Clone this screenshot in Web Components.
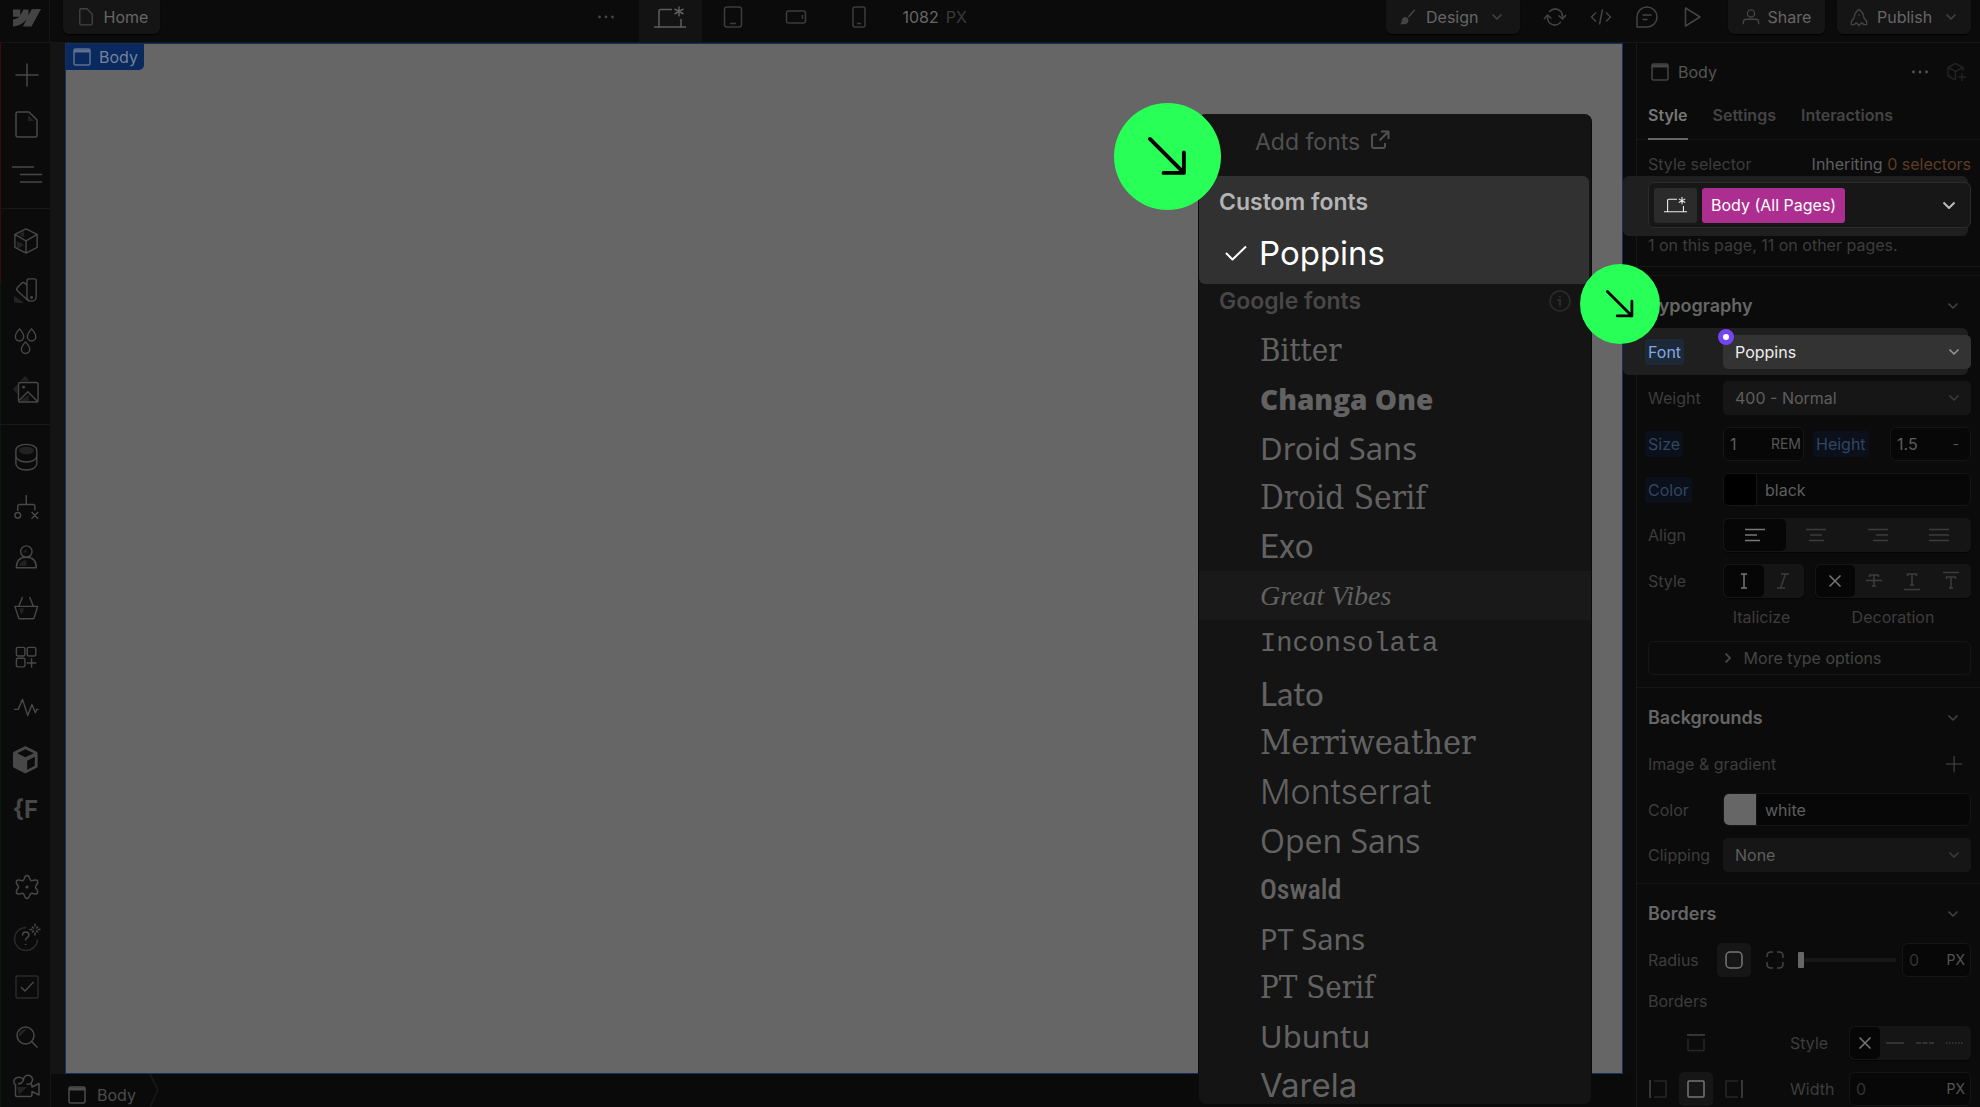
<!DOCTYPE html>
<html lang="en">
<head>
<meta charset="utf-8">
<title>Designer – Home</title>
<style>
html,body{margin:0;height:100%;background:#0b0b0b;overflow:hidden}
body{font-family:Inter,"Liberation Sans",sans-serif;font-size:16px;line-height:20px;color:#666}
</style>
</head>
<body>
<designer-app></designer-app>
<script>
const ICONS = {
  logo:[30,20,'<path fill="currentColor" stroke="none" d="M29 1 19.500 18.500H11L14.700 11C11.500 15.500 7 18 1 18.500V11.500Q5 11 7.500 8.800H1V1.500H8.300V7.500L11.400 1.500H16.500V7.400L19.600 1.200Z"/>'],
  page:[26,30,'<path d="M2 4a2 2 0 0 1 2-2h11l8 8v15a2 2 0 0 1-2 2H4a2 2 0 0 1-2-2z"/><path fill="#222" stroke="none" d="M14 5l6 6h-6z"/>'],
  doc:[18,22,'<path d="M2 3.500a1.500 1.500 0 0 1 1.500-1.500H10l6 6v10.500a1.500 1.500 0 0 1-1.500 1.500h-11A1.500 1.500 0 0 1 2 18.500z"/>'],
  plus:[26,26,'<path d="M13 1.500v23M1.500 13h23"/>'],
  nav:[32,22,'<path d="M1 3h22M9 10.500h22M9 18h22"/>'],
  cube:[28,30,'<path fill="#222" stroke="none" d="M4 15l8 4-8 5zM6 8l6-4v7z"/><path d="M14 2l12 6v14l-12 6-12-6V8zM2 8l12 7 12-7M14 15v13"/>'],
  swatch:[28,30,'<path fill="#222" stroke="none" d="M1 20l11 8H4q-3 0-3-3z"/><path d="M15 4a2 2 0 0 1 2-2h6a2 2 0 0 1 2 2v17a5 5 0 0 1-10 0zM15 9l-2-2q-2-2-4 0l-4 4q-2 2 0 4l12 11"/><circle cx="20" cy="22" r=".8" fill="currentColor"/>'],
  drops:[28,30,'<path d="M7 2q4.500 5 4.500 8.500a4.500 4.500 0 0 1-9 0Q2.500 7 7 2zM20 2q4.500 5 4.500 8.500a4.500 4.500 0 0 1-9 0Q15.500 7 20 2zM13.500 16q4.500 5 4.500 8a4.500 4.500 0 0 1-9 0Q9 21 13.500 16z"/>'],
  image:[32,32,'<path fill="#222" stroke="none" d="M1 14l5-5v11zM9 5l5-5 5 5zM9 27l9-7v7z"/><rect x="7" y="7" width="21" height="21" rx="2"/><path d="M8 26l9-9 10 10"/><circle cx="12.500" cy="12" r=".8" fill="currentColor"/>'],
  db:[26,32,'<ellipse cx="13" cy="9" rx="8" ry="4" fill="#222" stroke="none"/><path d="M2 9c0-3.500 4-6.500 11-6.500S24 5.500 24 9v14c0 3.500-4 6.500-11 6.500S2 26.500 2 23zM2 14.500c0 3.500 4 6.500 11 6.500s11-3 11-6.500"/>'],
  logic:[28,28,'<path d="M14 1v10M5 18v-5q0-2 2-2h14q2 0 2 2v4M19.500 19l7 7m0-7l-7 7"/><circle cx="5" cy="22.500" r="3"/>'],
  user:[26,28,'<path fill="#222" stroke="none" d="M5 23q2-6 8-6v6zM9 9l4-4v4z"/><circle cx="13" cy="8" r="6"/><path d="M2.500 25q0-11 10.500-11t10.500 11z"/>'],
  basket:[28,26,'<path fill="#222" stroke="none" d="M6 14h6l-3 7z"/><path d="M2 12h24l-4 12.500q-.3 .5-1 .5H7q-.7 0-1-.5zM10 2l-4 10M17.500 2l4 10"/>'],
  apps:[26,26,'<rect x="2.500" y="2.500" width="9" height="9" rx="1.500"/><rect x="14" y="2.500" width="9" height="9" rx="1.500"/><rect x="2.500" y="14" width="9" height="9" rx="1.500"/><path d="M18.500 14v10M13.500 19h10"/>'],
  pulse:[28,22,'<path d="M1 13h4.500L10 2.500l5.500 17L20 8l3.500 8.500L25 13h2"/>'],
  solid:[28,32,'<path fill="currentColor" stroke="none" fill-rule="evenodd" d="M14 1l12 6q1 .5 1 2v13q0 1.500-1 2l-12 6-12-6q-1-.5-1-2V9q0-1.500 1-2zM14 4.500L5.500 8.700 14 13l9-4.300zM16 16.500v9.500l8-4.200V12.500z"/>'],
  gear:[26,28,'<path d="M13 2.500c3 0 2 4 4 5s5-2 6.500.5-2 4-2 6 3.500 3.500 2 6-4.500-.5-6.500.5-1 5-4 5-2-4-4-5-5 2-6.500-.5 2-4 2-6-3.500-3.500-2-6 4.500.5 6.500-.5 1-5 4-5z"/><circle cx="13" cy="14" r=".8" fill="currentColor"/>'],
  help:[30,30,'<path opacity=".5" d="M14 5.500a11.500 11.500 0 1 0 11.500 12"/><path d="M10.500 13.500q0-3.500 3.200-3.500t3.200 3q0 1.700-2 2.800-1.300.8-1.300 2.700M13.600 22v1M23 1.500v3m0 6v3M17.500 7.500h3m5 0h3M20 4.500l2 2m4-2l-2 2m-4 4l2-2m4 2l-2-2"/>'],
  check:[26,26,'<rect opacity=".5" x="2" y="2" width="22" height="22" rx="1.500"/><path d="M7 13l4 4 8.500-9"/>'],
  search:[26,26,'<path fill="#222" stroke="none" d="M5 13q-1-8 8-8z"/><circle cx="11.500" cy="11.500" r="8.500"/><path d="M17.500 17.500l6 6"/>'],
  video:[30,26,'<path fill="#222" stroke="none" d="M5 13h10l-8 8z"/><path d="M3.500 10V21q0 1.500 1.500 1.500h13q2 0 2-2v-3l7 3.500V9.500l-7 3.500q0-3-1.500-3.500M3.500 11a5 4.500 0 1 1 8-5M6 9.500q3.500 1 5.500-3.500a4.500 4.500 0 1 1 3 4"/>'],
  dots:[18,4,'<g fill="currentColor" stroke="none"><circle cx="2.500" cy="2" r="1.400"/><circle cx="9" cy="2" r="1.400"/><circle cx="15.500" cy="2" r="1.400"/></g>'],
  laptop:[32,24,'<path d="M0 22h32M5 22V6q0-1.500 1.500-1.500H18M27 14v8M25 1.500v10M20.500 4l9 5m0-5l-9 5"/>'],
  tablet:[20,24,'<rect x="1.500" y="2" width="17" height="20" rx="2.500"/><path d="M7 18.500h6"/>'],
  land:[22,16,'<rect x="1.500" y="2" width="19" height="12" rx="2"/><path d="M17.500 6v4"/>'],
  phone:[16,24,'<rect x="2" y="2" width="12" height="20" rx="2"/><path d="M6 18.500h4"/>'],
  brush:[20,20,'<path d="M17.500 2L10.500 10" stroke-width="1.800"/><path fill="currentColor" stroke="none" d="M1 18q2-1 2-4 .500-4 4-4 3.500.500 3.500 4t-4 4z"/>'],
  down:[12,8,'<path d="M1.500 1.500L6 6l4.500-4.500"/>'],
  down2:[14,9,'<path stroke-width="2" d="M1.500 1.500L7 7l5.500-5.500"/>'],
  right:[8,12,'<path stroke-width="1.800" d="M1.500 1.500L6 6l-4.500 4.500"/>'],
  sync:[24,20,'<path d="M6 5q6-6 12-0.500 1.500 2 1.500 6M15.500 8.500l4 3.500 3.500-4M18 15q-6 6-12 .5Q4.300 13.500 4.500 9.500M1 12l3.500-4 4 3.500"/>'],
  code:[22,20,'<path d="M6 5.500L1.500 10 6 14.500M16 5.500l4.500 4.500-4.500 4.500M12.500 2.500l-3 15"/>'],
  chat:[24,24,'<path d="M2 22V11.500a10 10 0 1 1 10 10.500zM7.500 10h9M7.500 14.500h5"/>'],
  play:[20,22,'<path d="M2.500 2l14.500 9-14.500 9z"/>'],
  person:[20,20,'<circle cx="10" cy="6" r="4"/><path d="M1.500 18v-2q0-3.500 3.500-3.500h10q3.500 0 3.500 3.500v2"/>'],
  rocket:[20,20,'<path d="M4.500 11Q5 5 10 1.500 15 5 15.500 11l3 4v3.500h-3l-2.500-2-3 3-3-3-2.500 2h-3V15zM10 7v1.500"/>'],
  body:[18,18,'<rect x="1" y="1" width="16" height="16" rx="1.500"/><path stroke-width="3" d="M1 3h16"/>'],
  cubeplus:[20,20,'<path d="M17 9V5.500L9.500 1.500 2 5.500v8.500l7.500 4M2 5.500l7.500 4 7.500-4M9.500 9.500V18M16 11v8M12 15h8"/>'],
  ext:[20,20,'<path stroke-width="2" d="M7 4.500H4Q2 4.500 2 6.500V16q0 2 2 2h9q2 0 2-2v-3M11 1.500h7.500V9M18.500 1.500L9.500 10.500"/>'],
  info:[22,22,'<circle cx="11" cy="11" r="10"/><path stroke-width="2" d="M8.500 10H11v6.500M11 6v1.500"/>'],
  tick:[22,16,'<path stroke-width="2" d="M1 8l6.500 6.500L21 1.500"/>'],
  arrow:[40,40,'<path stroke-width="4" stroke-linecap="round" d="M2 2l35 35M37 16v21H16"/>'],
  al:[22,14,'<path stroke-width="1.500" d="M1 1.500h20M1 7h12M1 12.500h15"/>'],
  ac:[22,14,'<path stroke-width="1.500" d="M1 1.500h20M5 7h12M4 12.500h15"/>'],
  ar:[22,14,'<path stroke-width="1.500" d="M1 1.500h20M9 7h12M6 12.500h15"/>'],
  aj:[22,14,'<path stroke-width="1.500" d="M1 1.500h20M1 7h20M1 12.500h20"/>'],
  ti:[12,18,'<path d="M3 2h6M3 16h6M6 2v14"/>'],
  tit:[14,18,'<path d="M5 2h8M1 16h8M9.500 2l-5 14"/>'],
  x:[14,14,'<path d="M1.500 1.500l11 11m0-11l-11 11"/>'],
  strike:[18,18,'<path d="M4.500 5V3h9v2M9 3v11M7 14h4M1 8.500h16"/>'],
  under:[18,20,'<path d="M4.500 5V3h9v2M9 3v11M7 14h4M1 18.500h16"/>'],
  over:[18,20,'<path d="M4.500 8V6h9v2M9 6v11M7 17h4M1 1.500h16"/>'],
  round:[20,20,'<rect x="2" y="2" width="16" height="16" rx="4"/>'],
  corners:[20,20,'<path d="M2 7V6q0-4 4-4h2M12 2h2q4 0 4 4v2M18 12v2q0 4-4 4h-2M8 18H6q-4 0-4-4v-2"/>'],
  bt:[20,20,'<path d="M1 2h18"/><path opacity=".5" d="M2 6v11.500h16V6"/>'],
  bl:[20,20,'<path d="M2 1v18"/><path opacity=".5" d="M6 2h12v16H6"/>'],
  ba:[20,20,'<rect x="2" y="2" width="16" height="16" rx="1"/>'],
  br:[20,20,'<path d="M18 1v18"/><path opacity=".5" d="M14 2H2v16h12"/>'],
  solidl:[18,4,'<path d="M0 2h18"/>'],
  dash:[18,4,'<path stroke-dasharray="5 1.500" d="M0 2h18"/>'],
  dot:[18,4,'<path stroke-dasharray="1.500 1.500" d="M0 2h18"/>'],
  crumb:[10,33,'<path d="M1 0l8 16-8 17"/>']
};

const RESET = `
:host{display:block;box-sizing:border-box}
*{box-sizing:border-box}
button,input,select{font:inherit;color:inherit;background:none;border:0;margin:0;padding:0;outline:0;min-width:0}
button{display:flex;align-items:center;justify-content:center}
`;
function define(name, css, html) {
  customElements.define(name, class extends HTMLElement {
    constructor() {
      super();
      const t = document.createElement('template');
      t.innerHTML = `<style>${RESET}${css}</style>${typeof html === 'function' ? '' : html}`;
      const root = this.attachShadow({mode: 'open'});
      root.append(t.content.cloneNode(true));
      this.fill = typeof html === 'function' ? html : null;
    }
    connectedCallback() {
      if (this.fill) {
        const t = document.createElement('template');
        t.innerHTML = this.fill(this);
        this.shadowRoot.append(t.content.cloneNode(true));
        this.fill = null;
      }
    }
  });
}

define('wf-icon', `:host{display:block;flex:none}svg{display:block;overflow:visible}`, el => {
  const [w, h, body] = ICONS[el.getAttribute('name')];
  const s = Number(el.getAttribute('scale') || 100) / 100;
  return `<svg aria-hidden="true" width="${w * s}" height="${h * s}" viewBox="0 0 ${w} ${h}" fill="none" stroke="currentColor" stroke-width="1.500" stroke-linejoin="round">${body}</svg>`;
});

/* Top bar */
define('top-bar', `
:host{display:flex;height:43px;border-bottom:1px solid #161616;background:#0b0b0b;color:#666}
.logo{width:50px;display:flex;justify-content:center;padding:8px 0 0 5px;border-right:1px solid #141414;color:#444}
.main{flex:1;display:flex;justify-content:space-between;padding:0 9px 0 13px}
.pill{height:34px;background:#151515;border-radius:0 0 6px 6px;box-shadow:0 1px 1px #000}
.home{padding:0 12px 0 15px;gap:10px;width:97px}
.mid{display:flex;padding-right:5px;height:42px}
.mid button{width:63px;padding-bottom:8px;color:#3c3c3c}
.mid button:first-child{width:66px;color:#444}
.mid .on{background:#131313;color:#5e5e5e}
.size{display:flex;gap:7px;line-height:34px;padding-left:12px;width:78px;white-space:nowrap}
.size span:last-child{color:#3a3a3a}
.right{display:flex;align-items:start}
.tools{display:flex;padding:0 12px}
.tools button{width:46px;height:34px;color:#444}
.w134{width:134px;gap:9px;justify-content:start;padding-left:13px}.w97{width:97px;gap:8px;margin-right:12px}
.w134 wf-icon:last-child{margin-left:4px}
wf-icon{color:#444}.on wf-icon{color:#5e5e5e}.mid wf-icon{color:inherit}
`, `
<div class="logo"><wf-icon name="logo"></wf-icon></div>
<div class="main">
 <button class="pill home"><wf-icon name="doc" scale="89"></wf-icon>Home</button>
 <div class="mid">
  <button aria-label="More"><wf-icon name="dots"></wf-icon></button>
  <button class="on" aria-label="Desktop"><wf-icon name="laptop"></wf-icon></button>
  <button aria-label="Tablet"><wf-icon name="tablet"></wf-icon></button>
  <button aria-label="Landscape"><wf-icon name="land"></wf-icon></button>
  <button aria-label="Phone"><wf-icon name="phone"></wf-icon></button>
  <div class="size"><span>1082</span><span>PX</span></div>
 </div>
 <div class="right">
  <button class="pill w134"><wf-icon name="brush" scale="90"></wf-icon>Design<wf-icon name="down"></wf-icon></button>
  <div class="tools">
   <button aria-label="Sync"><wf-icon name="sync"></wf-icon></button>
   <button aria-label="Code"><wf-icon name="code"></wf-icon></button>
   <button aria-label="Comments"><wf-icon name="chat"></wf-icon></button>
   <button aria-label="Preview"><wf-icon name="play"></wf-icon></button>
  </div>
  <button class="pill w97"><wf-icon name="person" scale="90"></wf-icon>Share</button>
  <button class="pill w134"><wf-icon name="rocket" scale="90"></wf-icon>Publish<wf-icon name="down"></wf-icon></button>
 </div>
</div>`);

/* Left tool rail */
define('tool-rail', `
:host{width:51px;background:linear-gradient(#3a0c0c 0 240px,#0a1a0a 240px) left/1px 100% no-repeat #0b0b0b;border-right:1px solid #141414;overflow:hidden;color:#484848}
nav{display:flex;flex-direction:column;padding:7px 0 8px 3px}
nav+nav{border-top:1px solid #181818}
nav.apps{border:0;padding:0 0 0 1px;margin-top:-5px}
nav.last{border:0;margin-top:27px;padding-top:0}
button{height:50px;flex:none}
b{font-size:24px;line-height:24px}
`, `
<nav aria-label="Pages">
${['plus','page','nav'].map(n => `<button aria-label="${n}"><wf-icon name="${n}"></wf-icon></button>`).join('')}</nav>
<nav aria-label="Styles">
${['cube','swatch','drops','image'].map(n => `<button aria-label="${n}"><wf-icon name="${n}" scale="93"></wf-icon></button>`).join('')}</nav>
<nav aria-label="Data">
${['db','logic','user','basket','apps','pulse'].map(n => `<button aria-label="${n}"><wf-icon name="${n}" scale="95"></wf-icon></button>`).join('')}</nav>
<nav class="apps" aria-label="Apps"><button aria-label="Blocks"><wf-icon name="solid" scale="95"></wf-icon></button>
<button><b>{F</b></button></nav>
<nav class="last" aria-label="Help">
${['gear','help','check','search','video'].map(n => `<button aria-label="${n}"><wf-icon name="${n}"></wf-icon></button>`).join('')}</nav>`);

/* Canvas with its breadcrumb */
define('page-canvas', `
:host{flex:1;min-width:0;display:flex;flex-direction:column}
.stage{flex:1;display:flex;background:linear-gradient(90deg,#141414 50%,#0b0b0b 50%);padding:0 13px 0 14px}
.view{flex:1;background:#666;border:1px solid #14305f}
.tag{display:inline-flex;align-items:center;gap:8px;height:26px;padding:0 6px 0 7px;background:#09295f;color:#77839b;border-radius:0 0 5px 0;vertical-align:top}
.tag wf-icon{color:#5f6f8c}
footer{height:33px;background:#0a0a0a;display:flex;align-items:center;gap:11px;padding:9px 0 0 17px;color:#4c4c4c}
footer wf-icon:last-child{color:#1a1a1a;margin:-9px 0 0 2px}
`, `
<div class="stage"><div class="view"><span class="tag"><wf-icon name="body"></wf-icon>Body</span></div></div>
<footer><wf-icon name="body"></wf-icon><span>Body</span><wf-icon name="crumb"></wf-icon></footer>`);

/* Style panel parts */
define('prop-row', `
:host{display:flex;align-items:center;height:34px;color:#3d3d3d}
:host([low]){height:33px}
.label{width:75px;flex:none}
.chip{display:inline-block;margin-left:-3px;padding:3px;border-radius:3px;background:#0b101a;color:#304663}
:host([lit]) .chip{background:#1d2838;color:#81a8e0}
.body{flex:1;display:flex;align-items:center;min-width:0}
`, el => `<div class="label"><span class="${el.hasAttribute('set') ? 'chip' : ''}">${el.getAttribute('label')}</span></div><div class="body"><slot></slot></div>`);

define('drop-down', `
:host{flex:1;height:34px}
label{display:flex;align-items:center;height:34px;background:#161616;border-radius:5px;padding-right:11px;color:#3c3c3c}
select{appearance:none;flex:1;height:34px;padding-left:12px;color:#5e5e5e;opacity:1}
:host([lit]) label{background:#333;color:#999}
:host([lit]) select{color:#eee}
`, el => `<label><select aria-label="${el.getAttribute('name')}"><option>${el.getAttribute('value')}</option></select><wf-icon name="down"></wf-icon></label>`);

define('unit-field', `
:host{height:34px}
label{display:flex;align-items:center;height:34px;background:#070707;border:1px solid #161616;border-radius:6px;padding:0 2px 0 6px;color:#555}
input{flex:1;width:20px;height:30px;color:#5e5e5e}
:host([muted]) input{color:#333}
span{font-size:14px}
:host([pad]) label{padding-right:11px}
:host([muted]) label{padding-right:5px}
`, el => `<label><input aria-label="${el.getAttribute('name')}" value="${el.getAttribute('value')}"><span>${el.getAttribute('unit')}</span></label>`);

define('color-field', `
:host{flex:1;height:33px;min-width:0}
label{display:flex;height:33px;background:#070707;border:1px solid #161616;border-radius:6px;overflow:hidden}
i{width:33px;flex:none;border-right:1px solid #161616}
input{flex:1;width:20px;padding-left:8px;color:#5e5e5e}
`, el => `<label><i style="background:${el.getAttribute('shade')}"></i><input aria-label="Color" value="${el.getAttribute('value')}"></label>`);

define('button-group', `
:host{display:flex;height:34px;background:#151515;border-radius:5px;padding:1px;color:#3c3c3c;box-shadow:0 1px 1px #050505}
button{flex:1}
.on{background:#060606;border-radius:5px;color:#777}
`, el => el.getAttribute('icons').split(' ').map((n, i) => `<button class="${i ? '' : 'on'}" aria-label="${n}"><wf-icon name="${n}"></wf-icon></button>`).join(''));

define('panel-section', `
:host{border-top:1px solid #161616;padding:0 9px 0 11px}
header{display:flex;align-items:center;justify-content:space-between;height:59px;padding-right:12px;color:#444}
h2{margin:0;font-size:18px;line-height:22px;font-weight:600;color:#666}
.rows{display:flex;flex-direction:column;gap:12px}
`, el => `<header><h2>${el.getAttribute('title')}</h2><wf-icon name="down"></wf-icon></header><div class="rows"><slot></slot></div>`);

define('style-panel', `
:host{width:344px;flex:none;position:relative;border-left:1px solid #181818;background:#0b0b0b}
.spot{position:absolute;left:-14px;right:12px;background:#1f1f1f;border-radius:6px}
.s1{top:133px;height:60px}.s2{top:285px;height:47px}
.content{position:relative}
.title{display:flex;align-items:center;height:58px;padding:0 14px 0 14px;color:#555}
.title span{margin-left:9px;flex:1}
.title wf-icon:nth-of-type(1){color:#444}
.title wf-icon:nth-of-type(2){margin-right:17px}
.title wf-icon:nth-of-type(3){color:#222}
.tabs{display:flex;gap:25px;height:39px;padding:0 11px;border-bottom:1px solid #161616;color:#444;font-size:16px}
.tabs button{font-weight:600;height:39px;padding-bottom:10px;border-bottom:2px solid transparent}
.tabs .on{color:#777;border-color:#666}
.sel{padding:14px 9px 0 11px}
.line{display:flex;justify-content:space-between;color:#3d3d3d}
.line span:last-child{color:#5e5e5e}
.line em{font-style:normal;color:#5d3d26}
.box{display:flex;align-items:center;justify-content:start;gap:5px;height:46px;margin-top:8px;padding:0 14px 0 5px;border:1px solid #2b2b2b;border-radius:6px;background:#171717;width:100%}
.dev{width:43px;height:35px;border-radius:3px;background:#2b2b2b;display:flex;align-items:center;justify-content:center;color:#eee}
.pink{height:35px;line-height:35px;padding:0 9px;border-radius:3px;background:#ad2e91;color:#fff}
.box>wf-icon{margin-left:auto;color:#bbb}
.note{margin:7px 0 11px;color:#3d3d3d}
.gap{height:9px;border-top:1px solid #161616}
.dot{position:absolute;left:81px;top:286px;width:16px;height:16px;border-radius:50%;border:5px solid #7544f5;background:#fff}
.w81{width:81px;flex:none}.h{margin:0 0 0 9px;flex:1}
.h span{padding:3px;border-radius:3px;background:#0b101a;color:#304663}
.caps{display:flex;margin:-3px 0 2px;padding-left:75px;color:#3d3d3d}
.caps span{width:81px;text-align:center;padding-right:4px}
.caps span+span{flex:1;margin-left:11px;padding:0}
.more{height:34px;border:1px solid #161616;border-radius:6px;gap:12px;color:#444;padding-right:14px}
.grow{flex:1}
.ig{display:flex;justify-content:space-between;align-items:center;height:34px;padding-right:8px;color:#3d3d3d}
.ig button{color:#4a4a4a}
.sq{width:34px;height:34px;flex:none;border-radius:5px;color:#444}
.sq.on{background:#161616;color:#777}
.slide{appearance:none;width:98px;height:16px;margin:0 6px 0 6px;background:linear-gradient(#171717,#171717) center/100% 4px no-repeat}
.slide::-webkit-slider-thumb{appearance:none;width:6px;height:16px;background:#666;border-radius:1px}
.r{margin-left:-6px;display:flex;align-items:center;flex:1}
.grid{display:flex;gap:39px}
.pad{display:grid;grid-template-columns:repeat(3,34px);gap:12px 4px;justify-items:center;margin-left:-7px}
.pad button:first-child{grid-column:2}
.pad button:nth-child(2){grid-column:1}
.side{flex:1;display:flex;flex-direction:column;gap:12px;color:#3d3d3d}
.side div{display:flex;align-items:center}
.side div span{width:59px}
.side unit-field,.side button-group{flex:1}
.sub{color:#3d3d3d;margin:2px 0 3px}
`, `
<div class="spot s1"></div><div class="spot s2"></div>
<div class="content">
 <div class="title"><wf-icon name="body"></wf-icon><span>Body</span><wf-icon name="dots"></wf-icon><wf-icon name="cubeplus"></wf-icon></div>
 <div class="tabs"><button class="on">Style</button><button>Settings</button><button>Interactions</button></div>
 <div class="sel">
  <div class="line"><span>Style selector</span><span>Inheriting <em>0 selectors</em></span></div>
  <button class="box"><span class="dev"><wf-icon name="laptop" scale="72"></wf-icon></span><span class="pink">Body (All Pages)</span><wf-icon name="down2"></wf-icon></button>
  <p class="note">1 on this page, 11 on other pages.</p>
 </div>
 <div class="gap"></div>
 <panel-section title="Typography">
  <prop-row label="Font" set lit><drop-down lit name="Font" value="Poppins"></drop-down></prop-row>
  <prop-row label="Weight"><drop-down name="Weight" value="400 - Normal"></drop-down></prop-row>
  <prop-row label="Size" set><unit-field class="w81" name="Size" value="1" unit="REM"></unit-field><div class="h"><span>Height</span></div><unit-field pad class="w81" name="Height" value="1.5" unit="-"></unit-field></prop-row>
  <prop-row label="Color" set low><color-field shade="#000" value="black"></color-field></prop-row>
  <prop-row label="Align"><button-group class="grow" icons="al ac ar aj"></button-group></prop-row>
  <prop-row label="Style"><button-group class="w81" icons="ti tit"></button-group><button-group class="grow" style="margin-left:11px" icons="x strike under over"></button-group></prop-row>
  <div class="caps"><span>Italicize</span><span>Decoration</span></div>
  <button class="more"><wf-icon name="right"></wf-icon>More type options</button>
 </panel-section>
 <panel-section title="Backgrounds" style="margin-top:12px">
  <div class="ig"><span>Image &amp; gradient</span><button aria-label="Add"><wf-icon name="plus" scale="70"></wf-icon></button></div>
  <prop-row label="Color" low><color-field shade="#666" value="white"></color-field></prop-row>
  <prop-row label="Clipping"><drop-down name="Clipping" value="None"></drop-down></prop-row>
 </panel-section>
 <panel-section title="Borders" style="margin-top:11px">
  <prop-row label="Radius"><div class="r"><button class="sq on" aria-label="All corners"><wf-icon name="round"></wf-icon></button><button class="sq" style="margin-left:7px" aria-label="Each corner"><wf-icon name="corners"></wf-icon></button><input class="slide" type="range" value="0" aria-label="Radius"><unit-field muted class="grow" name="Radius value" value="0" unit="PX"></unit-field></div></prop-row>
  <div class="sub">Borders</div>
  <div class="grid">
   <div class="pad"><button class="sq" aria-label="Top"><wf-icon name="bt"></wf-icon></button><button class="sq" aria-label="Left"><wf-icon name="bl"></wf-icon></button><button class="sq on" aria-label="All"><wf-icon name="ba"></wf-icon></button><button class="sq" aria-label="Right"><wf-icon name="br"></wf-icon></button></div>
   <div class="side"><div><span>Style</span><button-group icons="x solidl dash dot"></button-group></div><div><span>Width</span><unit-field muted name="Width" value="0" unit="PX"></unit-field></div></div>
  </div>
 </panel-section>
</div>
<div class="dot"></div>`);

/* Font picker: name, stack, size, weight, style */
const FONTS = [
  ['Bitter', '"DejaVu Serif Condensed","DejaVu Serif"', 31, 400],
  ['Changa One', '"Open Sans"', 28, 800],
  ['Droid Sans', '"Noto Sans"', 31, 400],
  ['Droid Serif', '"DejaVu Serif Condensed","DejaVu Serif"', 33, 400],
  ['Exo', 'Roboto', 33, 400],
  ['Great Vibes', '"Liberation Serif"', 28, 400, 'italic'],
  ['Inconsolata', '"Liberation Mono"', 27, 400],
  ['Lato', 'Lato', 33, 400],
  ['Merriweather', '"DejaVu Serif Condensed","DejaVu Serif"', 34, 400],
  ['Montserrat', 'Inter', 34, 300],
  ['Open Sans', '"Open Sans"', 32, 400],
  ['Oswald', '"Roboto Condensed","DejaVu Sans Condensed"', 28, 500],
  ['PT Sans', '"Noto Sans"', 29, 400],
  ['PT Serif', '"DejaVu Serif Condensed","DejaVu Serif"', 31, 400],
  ['Ubuntu', '"Noto Sans"', 31, 400],
  ['Varela', 'Inter', 33, 400]
];
define('font-menu', `
:host{position:absolute;top:114px;bottom:2px;right:388px;width:394px;background:#141414;border:1px solid #0a0a0a;border-top:0;border-radius:8px;overflow:hidden;font-size:23px;line-height:28px}
.add{display:flex;align-items:center;gap:10px;height:62px;padding:0 0 6px 56px;color:#505050;width:100%;justify-content:start}
.add wf-icon{margin-top:-4px}
.custom{height:108px;background:#313131;border-radius:6px;margin-right:2px;padding:12px 20px 0}
h3{margin:0;font-size:23px;line-height:28px;font-weight:600;color:#b4b4b4}
.pick{display:flex;align-items:center;gap:12px;width:100%;justify-content:start;height:40px;margin-top:17px;padding-left:6px;color:#fff;font-size:33px}
.google{display:flex;align-items:center;justify-content:space-between;height:34px;padding:0 20px;color:#2c2c2c}
.google h3{color:#474747}
ul{margin:8px 0 0;padding:0;list-style:none}
li button{width:100%;height:49px;padding-left:61px;justify-content:start;color:#626262;white-space:nowrap}
.hover{background:#191919}
`, `
<button class="add">Add fonts<wf-icon name="ext"></wf-icon></button>
<div class="custom"><h3>Custom fonts</h3><button class="pick"><wf-icon name="tick"></wf-icon>Poppins</button></div>
<div class="google"><h3>Google fonts</h3><wf-icon name="info"></wf-icon></div>
<ul>${FONTS.map(f => `<li><button class="${f[0] === 'Great Vibes' ? 'hover' : ''}" style='font:${f[4] || 'normal'} ${f[3]} ${f[2]}px/49px ${f[1]},Inter,sans-serif'>${f[0]}</button></li>`).join('')}</ul>`);

define('arrow-badge', `
:host{position:absolute;display:flex;align-items:center;justify-content:center;border-radius:50%;background:#28ff57;color:#000}
`, el => `<wf-icon name="arrow" scale="${el.getAttribute('scale')}"></wf-icon>`);

define('designer-app', `
:host{display:flex;flex-direction:column;height:100vh;position:relative;overflow:hidden}
main{flex:1;min-height:0;display:flex}
.a{top:103px;right:759px;width:107px;height:107px}
.b{top:264px;right:320px;width:80px;height:80px}
`, `
<top-bar></top-bar>
<main><tool-rail></tool-rail><page-canvas></page-canvas><style-panel></style-panel></main>
<font-menu></font-menu>
<arrow-badge class="a" scale="97"></arrow-badge>
<arrow-badge class="b" scale="70"></arrow-badge>`);
</script>
</body>
</html>
